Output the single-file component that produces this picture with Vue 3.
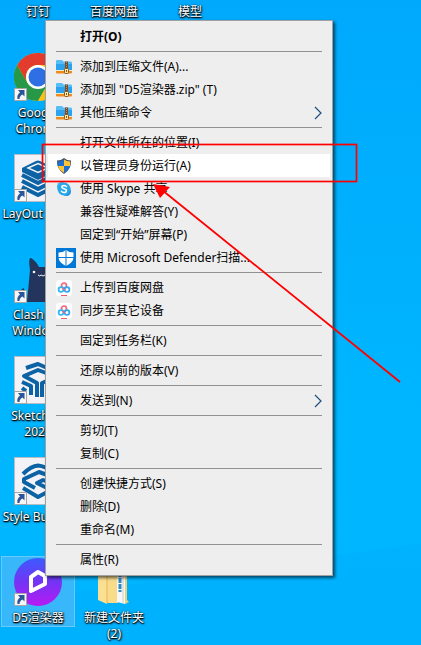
<template>
  <div class="desktop">
    <svg class="wallpaper" viewBox="0 0 421 645" preserveAspectRatio="none" aria-hidden="true">
      <path d="M0 590 L421 532 V645 H0 Z" />
    </svg>

    <!-- Desktop shortcuts -->
    <main class="shortcuts">
      <div v-for="s in shortcuts" :key="s.label" class="shortcut" :class="{ selected: s.selected, 'label-only': !s.icon }">
        <div v-if="s.icon" class="shortcut-icon">
          <svg v-if="s.icon === 'chrome'" viewBox="0 0 48 48">
            <circle cx="24" cy="24" r="24" fill="#fbc116" />
            <path d="M3.2 12 A24 24 0 0 0 24 48 L34.4 30 L24 24 L13.6 30 Z" fill="#279847" />
            <path d="M24 12 H44.8 A24 24 0 0 1 24 48 L34.4 30 Z" fill="#fbc116" />
            <path d="M3.2 12 A24 24 0 0 1 44.8 12 H24 A12 12 0 0 0 13.6 30 Z" fill="#e33b2e" />
            <circle cx="24" cy="24" r="12" fill="#fff" />
            <circle cx="24" cy="24" r="9.5" fill="#2f6fe4" />
          </svg>

          <svg v-else-if="s.icon === 'layout'" viewBox="0 0 48 48">
            <rect x="0.5" y="0.5" width="47" height="47" fill="#f2f2f7" stroke="#b9bcc4" />
            <path d="M8 14 L22 7 Q24 6 26 7 L40 14 V18 L24 26 L8 18 Z" fill="#0b63a5" />
            <path d="M14 14 L24 9.500 L34 14 L24 18.500 Z" fill="none" stroke="#f2f2f7" stroke-width="1.400" />
            <g fill="none" stroke="#0b63a5" stroke-width="4" stroke-linejoin="round">
              <path d="M8 21 L24 29 L40 21" />
              <path d="M8 27 L24 35 L40 27" />
              <path d="M8 33 L24 41 L40 33" />
            </g>
          </svg>

          <svg v-else-if="s.icon === 'clash'" viewBox="0 0 48 48">
            <path d="M13 47 L16 15 Q14 2 17 3 Q22 6 25 12 H36 Q39 6 44 3 Q47 5 46 15 L48 47 Z" fill="#23355c" />
            <path d="M13 44 Q4 43 7 38 Q8 35 10 34" fill="none" stroke="#23355c" stroke-width="2.4" />
            <circle cx="20" cy="17" r="1.3" fill="#f2f4f8" />
            <circle cx="36" cy="17" r="1.3" fill="#f2f4f8" />
            <path d="M24 20 Q26 22 27 20 Q29 22 31 20" fill="none" stroke="#f2f4f8" stroke-width="1" />
          </svg>

          <svg v-else-if="s.icon === 'sketchup'" viewBox="0 0 48 48">
            <rect x="0.5" y="0.5" width="47" height="47" fill="#f2f2f7" stroke="#b9bcc4" />
            <g fill="none" stroke="#0b63a5" stroke-width="4" stroke-linejoin="round">
              <path d="M12 12 L24 8 L40 15" />
              <path d="M40 20 L24 14 L10 20 L23 27 V41" />
              <path d="M8 26 L17 30 V39" />
              <path d="M8 32 L12 35" />
              <path d="M28 41 V27 L40 22" />
            </g>
          </svg>

          <svg v-else-if="s.icon === 'style'" viewBox="0 0 48 48">
            <rect x="0.5" y="0.5" width="47" height="47" fill="#f2f2f7" stroke="#b9bcc4" />
            <g fill="none" stroke="#0b63a5" stroke-width="4" stroke-linejoin="round">
              <path d="M9 17 Q17 9 24 8.500 Q31 9 39 15" />
              <path d="M39 20 L25 15 L10 22 V25 L21 31" />
              <path d="M39 27 L29 23 L23 26 L37 33 L24 40 L9 31" />
            </g>
          </svg>

          <svg v-else-if="s.icon === 'd5'" viewBox="0 0 48 48">
            <defs>
              <linearGradient id="d5-fill" x1="0" y1="0" x2="0" y2="1">
                <stop offset="0" stop-color="#3b5bff" />
                <stop offset="0.5" stop-color="#7434f5" />
                <stop offset="1" stop-color="#b819f4" />
              </linearGradient>
            </defs>
            <circle cx="24" cy="24" r="24" fill="url(#d5-fill)" />
            <path d="M17 19 L24 14 L31 18 V26 L17 33 Z" fill="none" stroke="#fff" stroke-width="4" stroke-linejoin="round" />
          </svg>

          <svg v-else viewBox="0 0 48 48">
            <path d="M8 2 H28 V45 H16 L8 41 Z" fill="#f3d177" />
            <path d="M8 4 L17 8 V46 L8 42 Z" fill="#fbe094" />
            <path d="M17 6 L27 10 V45 H19 L17 44 Z" fill="#f8dc8b" />
            <path d="M17 8 V45" stroke="#e2b955" stroke-width="1" />
            <path d="M27 5 H35 V46 L27 44 Z" fill="#f5f7f8" />
            <path d="M30 14 V34" stroke="#2f88c0" stroke-width="3" stroke-dasharray="5 1" />
            <path d="M33 8 V45" stroke="#c9d0d4" stroke-width="1" />
            <path d="M35 6 L37 8 V42 L39 44 L35 46 Z" fill="#efcf76" />
          </svg>

          <svg v-if="s.link" class="link-arrow" viewBox="0 0 13 13">
            <rect x="0.5" y="0.5" width="12" height="12" fill="#f7f7f7" stroke="#a6a6a6" />
            <path d="M4 2 H10.500 V8.500 L8.500 6.500 Q5.500 8 5.500 11 H3.500 Q2.500 7 6 4.500 Z" fill="#2a5699" />
          </svg>
        </div>
        <span class="shortcut-label">{{ s.label }}</span>
      </div>
    </main>

    <!-- Context menu -->
    <div class="context-menu" role="menu">
      <template v-for="(group, i) in groups" :key="i">
        <hr v-if="i > 0" class="separator" />
        <button
          v-for="item in group"
          :key="item.text"
          type="button"
          role="menuitem"
          class="menu-item"
          :class="{ default: item.bold, active: item.active }"
        >
          <span class="menu-icon">
            <svg v-if="item.icon === 'zip'" class="icon-small" viewBox="0 0 16 16">
              <path d="M0 2 Q0 1 1 1 H6 L7.500 2.500 H15 Q16 2.500 16 4 V12 H0 Z" fill="#56bdf7" />
              <path d="M0 5 H16 V11 H0 Z" fill="#2da2ee" />
              <path d="M0 11 H16 V12.500 H0 Z" fill="#e6f0c8" />
              <path d="M0 12 H16 V13.500 Q16 14.500 15 14.500 H1 Q0 14.500 0 13.500 Z" fill="#f08a1c" />
              <rect x="9" y="2.500" width="3" height="8" fill="#7d4a24" />
              <path d="M10.500 3 V10" stroke="#c98f4c" stroke-width="1" stroke-dasharray="1 1" />
              <rect x="8.500" y="9.500" width="4" height="5" rx="1" fill="#ffe9a8" stroke="#93531a" />
              <rect x="10" y="11" width="1" height="2" fill="#93531a" />
            </svg>

            <svg v-else-if="item.icon === 'shield'" class="icon-small" viewBox="0 0 16 16">
              <path d="M8 0 Q11 2.500 15 2.500 Q15.500 11 8 16 Q0.500 11 1 2.500 Q5 2.500 8 0 Z" fill="#43525f" />
              <path d="M8 1.500 V8 H2 Q1.800 5.500 2 3.600 Q5.500 3.500 8 1.500 Z" fill="#1c6fd0" />
              <path d="M8 1.500 Q10.500 3.500 14 3.600 Q14.200 5.500 14 8 H8 Z" fill="#ffc536" />
              <path d="M8 8 V14.800 Q3 12 2 8 Z" fill="#ffc536" />
              <path d="M8 8 H14 Q13 12 8 14.800 Z" fill="#1c6fd0" />
            </svg>

            <svg v-else-if="item.icon === 'skype'" class="icon-small" viewBox="0 0 16 16">
              <circle cx="5.500" cy="5.500" r="4.500" fill="#35b5f1" />
              <circle cx="10.500" cy="10.500" r="4.500" fill="#1b8fdc" />
              <circle cx="8" cy="8" r="6.500" fill="#28a8ea" />
              <path
                d="M10.500 5.600 Q9.700 4.400 8 4.400 Q5.800 4.500 5.800 6 Q5.800 7.300 8 7.700 Q10.500 8.200 10.400 9.800 Q10.200 11.500 8 11.500 Q6.200 11.500 5.400 10.200"
                fill="none"
                stroke="#fff"
                stroke-width="1.500"
                stroke-linecap="round"
              />
            </svg>

            <svg v-else-if="item.icon === 'defender'" class="icon-large" viewBox="0 0 20 20">
              <rect width="20" height="20" fill="#0078d7" />
              <path d="M10 2 Q13 4.500 17.500 4.500 V9 Q17.500 14.500 10 18 Q2.500 14.500 2.500 9 V4.500 Q7 4.500 10 2 Z" fill="#fff" />
              <path d="M10 2 V18 M2 9.500 H18" stroke="#0078d7" stroke-width="1" />
            </svg>

            <svg v-else-if="item.icon === 'baidu'" class="icon-small" viewBox="0 0 16 16">
              <rect width="16" height="16" rx="3" fill="#fff" />
              <circle cx="8" cy="5.500" r="2.500" fill="none" stroke="#f0657c" stroke-width="1.700" />
              <circle cx="5" cy="9.500" r="2.400" fill="none" stroke="#36b6f3" stroke-width="1.800" />
              <circle cx="11" cy="9.500" r="2.400" fill="none" stroke="#36a6f3" stroke-width="1.800" />
              <path d="M6.500 8 L9 10.500" stroke="#f0657c" stroke-width="1.300" />
              <path d="M5 15.500 H11" stroke="#ee5a70" stroke-width="1" />
            </svg>
          </span>
          <span class="menu-text">{{ item.text }}</span>
          <svg v-if="item.submenu" class="chevron" viewBox="0 0 8 14">
            <path d="M1 1 L7 7 L1 13" fill="none" stroke="#1d4f80" stroke-width="1.200" />
          </svg>
        </button>
      </template>
    </div>

    <!-- Red callout over the highlighted entry -->
    <svg class="callout" viewBox="0 0 421 400" aria-hidden="true">
      <rect x="42.500" y="144.500" width="314" height="37" fill="none" stroke="#f00" stroke-width="1.700" />
      <path d="M162 190 L400 382" stroke="#f00" stroke-width="1.800" />
      <path d="M153 184 L170 187 L160 198 Z" fill="#f00" />
    </svg>
  </div>
</template>

<script setup>
const shortcuts = [
  { label: '钉钉' },
  { label: '百度网盘' },
  { label: '模型' },
  { label: 'Google Chrome', icon: 'chrome', link: true },
  { label: 'LayOut 2022', icon: 'layout', link: true },
  { label: 'Clash for Windows', icon: 'clash', link: true },
  { label: 'SketchUp 2022', icon: 'sketchup', link: true },
  { label: 'Style Builder', icon: 'style', link: true },
  { label: 'D5渲染器', icon: 'd5', link: true, selected: true },
  { label: '新建文件夹 (2)', icon: 'folder' },
]

const groups = [
  [{ text: '打开(O)', bold: true }],
  [
    { text: '添加到压缩文件(A)...', icon: 'zip' },
    { text: '添加到 "D5渲染器.zip" (T)', icon: 'zip' },
    { text: '其他压缩命令', icon: 'zip', submenu: true },
  ],
  [
    { text: '打开文件所在的位置(I)' },
    { text: '以管理员身份运行(A)', icon: 'shield', active: true },
    { text: '使用 Skype 共享', icon: 'skype' },
    { text: '兼容性疑难解答(Y)' },
    { text: '固定到“开始”屏幕(P)' },
    { text: '使用 Microsoft Defender扫描...', icon: 'defender' },
  ],
  [
    { text: '上传到百度网盘', icon: 'baidu' },
    { text: '同步至其它设备', icon: 'baidu' },
  ],
  [{ text: '固定到任务栏(K)' }],
  [{ text: '还原以前的版本(V)' }],
  [{ text: '发送到(N)', submenu: true }],
  [{ text: '剪切(T)' }, { text: '复制(C)' }],
  [{ text: '创建快捷方式(S)' }, { text: '删除(D)' }, { text: '重命名(M)' }],
  [{ text: '属性(R)' }],
]
</script>

<style>
body {
  margin: 0;
}
</style>

<style scoped>
.desktop {
  position: relative;
  min-height: 100vh;
  overflow: hidden;
  background: linear-gradient(#00a9fc, #00b7ff 70%, #00b4ff);
  font-family: "Noto Sans", "Noto Sans CJK SC", sans-serif;
  font-size: 12px;
}

.wallpaper {
  position: absolute;
  inset: 0;
  width: 100%;
  height: 100%;
  fill: rgba(0, 150, 240, 0.08);
}

/* ===== Shortcuts ===== */
.shortcuts {
  position: relative;
  display: grid;
  grid-template-columns: repeat(auto-fill, 76px);
  grid-template-rows: 53px;
  grid-auto-rows: 101px;
}

.shortcut {
  grid-column: 1;
  display: flex;
  flex-direction: column;
  align-items: center;
  gap: 4px;
}

.shortcut.label-only {
  grid-column: auto;
  padding-top: 4px;
}

.shortcut:last-child {
  grid-column: 2;
}

.shortcut.selected {
  align-self: start;
  margin: -2px 1px 0;
  padding: 1px 0 0;
  border: 1px solid #6cc8fb;
  background: #38b8fa;
}

.shortcut-icon {
  position: relative;
  width: 48px;
  height: 48px;
}

.shortcut-icon svg {
  display: block;
}

.shortcut-icon .link-arrow {
  position: absolute;
  left: 0;
  bottom: 0;
  width: 13px;
  height: 13px;
}

.shortcut-label {
  max-width: 74px;
  color: #fff;
  line-height: 16px;
  text-align: center;
  text-shadow: 0 1px 1px #000, 1px 1px 2px #000, 0 0 2px rgba(0, 0, 0, 0.7);
}

/* ===== Context menu ===== */
.context-menu {
  position: absolute;
  top: 20px;
  left: 45px;
  box-sizing: border-box;
  width: 288px;
  padding: 4px 2px;
  border: 1px solid #a0a0a0;
  background: #eee;
  box-shadow: 2px 2px 3px rgba(0, 0, 0, 0.6);
}

.menu-item {
  display: flex;
  align-items: center;
  width: 100%;
  height: 23px;
  padding: 0 8px;
  border: none;
  background: none;
  color: #000;
  font: inherit;
  text-align: left;
}

.menu-item.default {
  font-weight: bold;
}

.menu-item.active {
  background: #fff;
}

.menu-icon {
  display: flex;
  flex: 0 0 24px;
}

.icon-small {
  width: 16px;
  height: 16px;
}

.icon-large {
  width: 20px;
  height: 20px;
}

.menu-text {
  flex: 1;
  line-height: 18px;
  white-space: nowrap;
}

.chevron {
  width: 8px;
  height: 14px;
}

.separator {
  height: 1px;
  margin: 3px 8px;
  border: none;
  background: #919191;
}

.callout {
  position: absolute;
  top: 0;
  left: 0;
  width: 421px;
  height: 400px;
  pointer-events: none;
}
</style>
